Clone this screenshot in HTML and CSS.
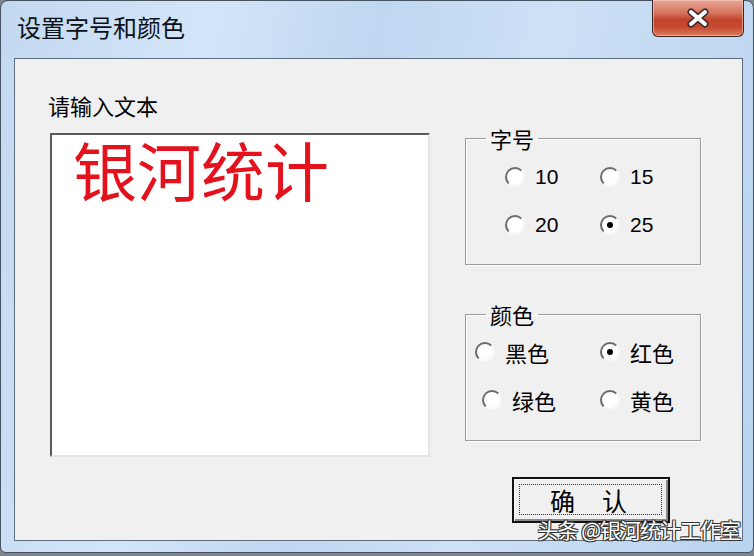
FILE: index.html
```html
<!DOCTYPE html>
<html>
<head>
  <meta charset="utf-8">
  <title>设置字号和颜色</title>
  <link rel="stylesheet" href="styles.css">
</head>
<body>
  <div class="window">
    <div class="titlebar">
      <div class="title">设置字号和颜色</div>
      <div class="close-btn">
        <svg width="26" height="20" viewBox="0 0 26 20">
          <path d="M6 4 L20 16 M20 4 L6 16" stroke="#3c2b2b" stroke-width="7" stroke-linecap="round"/>
          <path d="M6 4 L20 16 M20 4 L6 16" stroke="#ffffff" stroke-width="4" stroke-linecap="round"/>
        </svg>
      </div>
    </div>

    <div class="client">
      <!-- text input -->
      <div class="left-col">
        <div class="label">请输入文本</div>
        <div class="text-box">
          <div class="sample">银河统计</div>
        </div>
      </div>

      <!-- options -->
      <div class="right-col">
        <fieldset class="group">
          <legend>字号</legend>
          <div class="radio-grid size-grid">
            <div class="radio"><span class="dot"></span><span class="num">10</span></div>
            <div class="radio"><span class="dot"></span><span class="num">15</span></div>
            <div class="radio"><span class="dot"></span><span class="num">20</span></div>
            <div class="radio"><span class="dot checked"></span><span class="num">25</span></div>
          </div>
        </fieldset>

        <fieldset class="group color-group">
          <legend>颜色</legend>
          <div class="radio-grid color-grid">
            <div class="radio"><span class="dot"></span><span>黑色</span></div>
            <div class="radio"><span class="dot checked"></span><span>红色</span></div>
            <div class="radio shifted"><span class="dot"></span><span>绿色</span></div>
            <div class="radio"><span class="dot"></span><span>黄色</span></div>
          </div>
        </fieldset>

        <div class="ok-btn">
          <div class="focus-ring"><span>确</span><span>认</span></div>
        </div>
      </div>
    </div>

    <div class="watermark">头条 @银河统计工作室</div>
  </div>
</body>
</html>
```

FILE: styles.css
```css
body {
  margin: 0;
  background-color: #7d848c;
  font-family: "Noto Sans CJK SC", "DejaVu Sans", sans-serif;
  width: 754px;
  height: 556px;
  overflow: hidden;
}

/* Aero style frame */
.window {
  position: relative;
  width: 754px;
  height: 553px;
  box-sizing: border-box;
  border: 1px solid #46525f;
  border-radius: 8px 8px 6px 6px;
  background: linear-gradient(100deg, #c3d9f1 0%, #d3e5f8 25%, #bfd7f1 45%, #cde1f6 65%, #b9d3ee 100%);
  display: flex;
  flex-direction: column;
}

.titlebar {
  height: 57px;
  display: flex;
  justify-content: space-between;
  align-items: flex-start;
  flex-shrink: 0;
}

.title {
  margin: 11px 0 0 16px;
  font-size: 24px;
  line-height: 30px;
  color: #0c1118;
}

.close-btn {
  width: 92px;
  height: 37px;
  margin: -1px 9px 0 0;
  box-sizing: border-box;
  border: 1px solid #3b2826;
  border-top: none;
  border-radius: 0 0 6px 6px;
  background: linear-gradient(#e7a597 0%, #d7765f 35%, #c2432a 55%, #c54a30 75%, #dc7a5d 100%);
  box-shadow: inset 0 0 0 1px rgba(255, 220, 210, 0.5);
  display: flex;
  justify-content: center;
  align-items: center;
}

.client {
  flex: 1;
  margin: 0 10px 11px 13px;
  background-color: #f0f0f0;
  border: 1px solid #5d6d80;
  display: flex;
}

.left-col {
  padding: 33px 0 0 33px;
}

.label {
  font-size: 22px;
  line-height: 26px;
  color: #000;
}

.text-box {
  margin: 15px 0 0 2px;
  width: 380px;
  height: 324px;
  box-sizing: border-box;
  background: #fff;
  border: 2px solid;
  border-color: #5a5a5a #e4e4e4 #e4e4e4 #5a5a5a;
  padding: 0 0 0 21px;
}

.sample {
  font-size: 64px;
  line-height: 66px;
  color: #e3121c;
}

.right-col {
  margin: 67px 0 0 35px;
  display: flex;
  flex-direction: column;
}

.group {
  margin: 0;
  padding: 0;
  width: 236px;
  height: 139px;
  box-sizing: border-box;
  border: 1px solid #9a9a9a;
  box-shadow: 1px 1px 0 #fff, inset 1px 1px 0 #fff;
  min-inline-size: 0;
}

.group legend {
  margin-left: 20px;
  padding: 0 4px;
  font-size: 22px;
  line-height: 24px;
  color: #000;
}

.color-group {
  margin-top: 37px;
}

.radio-grid {
  display: grid;
  grid-auto-rows: 48px;
}

.size-grid {
  grid-template-columns: 95px 95px;
  padding: 3px 0 0 39px;
}

.color-grid {
  grid-template-columns: 125px 95px;
  padding: 2px 0 0 9px;
}

.radio {
  display: flex;
  align-items: center;
  gap: 10px;
  font-size: 22px;
  color: #000;
}

.radio.shifted {
  padding-left: 7px;
}

.num {
  font-family: "Liberation Sans", sans-serif;
  font-size: 21px;
}

/* classic sunken radio */
.dot {
  width: 20px;
  height: 20px;
  box-sizing: border-box;
  border-radius: 50%;
  border: 2px solid;
  border-color: #6a6a6a #f8f8f8 #f8f8f8 #6a6a6a;
  background: radial-gradient(circle at 45% 45%, #fff 60%, #ececec 100%);
  position: relative;
  flex-shrink: 0;
}

.dot.checked::after {
  content: "";
  position: absolute;
  left: 5px;
  top: 5px;
  width: 6px;
  height: 6px;
  border-radius: 50%;
  background: #000;
}

.ok-btn {
  margin: 36px 0 0 47px;
  width: 158px;
  height: 46px;
  box-sizing: border-box;
  border: 2px solid #111;
  background: #f0f0f0;
  box-shadow: inset 1px 1px 0 #fff, inset -2px -2px 0 #8a8a8a;
  padding: 5px 6px 6px 5px;
}

.focus-ring {
  height: 100%;
  box-sizing: border-box;
  border: 1px dotted #333;
  display: flex;
  justify-content: center;
  align-items: center;
  gap: 27px;
  font-size: 25px;
  color: #000;
  padding-right: 4px;
}

.watermark {
  position: absolute;
  right: 13px;
  bottom: 12px;
  font-size: 21px;
  line-height: 22px;
  color: #fff;
  text-shadow: -1px -1px 0 #333, 1px -1px 0 #333, -1px 1px 0 #333, 1px 1px 0 #333;
  letter-spacing: -1px;
}
```
